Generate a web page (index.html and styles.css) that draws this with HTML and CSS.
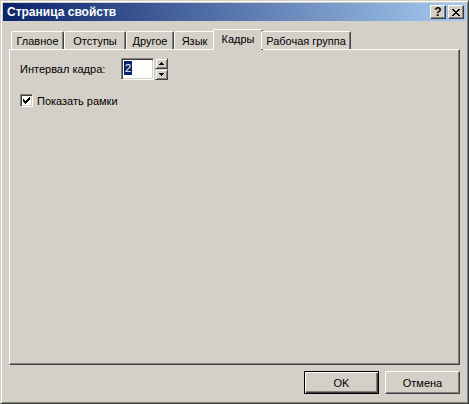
FILE: index.html
```html
<!DOCTYPE html>
<html lang="ru">
<head>
<meta charset="utf-8">
<link rel="stylesheet" href="styles.css">
</head>
<body>
<div class="window">
  <div class="titlebar">
    <span class="title">Страница свойств</span>
    <div class="tbtns">
      <div class="tbtn help">?</div>
      <div class="tbtn">
        <svg width="8" height="7" viewBox="0 0 8 7" shape-rendering="crispEdges" fill="#000">
          <rect x="0" y="0" width="2" height="1"/><rect x="6" y="0" width="2" height="1"/>
          <rect x="1" y="1" width="2" height="1"/><rect x="5" y="1" width="2" height="1"/>
          <rect x="2" y="2" width="4" height="1"/>
          <rect x="3" y="3" width="2" height="1"/>
          <rect x="2" y="4" width="4" height="1"/>
          <rect x="1" y="5" width="2" height="1"/><rect x="5" y="5" width="2" height="1"/>
          <rect x="0" y="6" width="2" height="1"/><rect x="6" y="6" width="2" height="1"/>
        </svg>
      </div>
    </div>
  </div>
  <div class="body">
    <div class="tabs">
      <div class="tab w1">Главное</div>
      <div class="tab w2">Отступы</div>
      <div class="tab w3">Другое</div>
      <div class="tab w4">Язык</div>
      <div class="tab w5 sel">Кадры</div>
      <div class="tab w6">Рабочая группа</div>
    </div>
    <div class="panel">
      <div class="row">
        <span class="lbl">Интервал кадра:</span>
        <div class="edit"><span class="hl">2</span></div>
        <div class="arrows">
          <div class="arr">
            <svg width="5" height="3" viewBox="0 0 5 3" shape-rendering="crispEdges" fill="#000"><rect x="2" y="0" width="1" height="1"/><rect x="1" y="1" width="3" height="1"/><rect x="0" y="2" width="5" height="1"/></svg>
          </div>
          <div class="arr">
            <svg width="5" height="3" viewBox="0 0 5 3" shape-rendering="crispEdges" fill="#000"><rect x="0" y="0" width="5" height="1"/><rect x="1" y="1" width="3" height="1"/><rect x="2" y="2" width="1" height="1"/></svg>
          </div>
        </div>
      </div>
      <div class="chk">
        <span class="box">
          <svg width="7" height="7" viewBox="0 0 7 7" shape-rendering="crispEdges" fill="#000">
            <rect x="6" y="0" width="1" height="1"/>
            <rect x="5" y="1" width="2" height="1"/>
            <rect x="0" y="2" width="1" height="1"/><rect x="4" y="2" width="3" height="1"/>
            <rect x="0" y="3" width="2" height="1"/><rect x="3" y="3" width="3" height="1"/>
            <rect x="0" y="4" width="5" height="1"/>
            <rect x="1" y="5" width="3" height="1"/>
            <rect x="2" y="6" width="1" height="1"/>
          </svg>
        </span>
        <span class="chk-label">Показать рамки</span>
      </div>
    </div>
    <div class="buttons">
      <div class="btn def">OK</div>
      <div class="btn">Отмена</div>
    </div>
  </div>
</div>
</body>
</html>
```
FILE: styles.css
```css
html, body {
  margin: 0;
  padding: 0;
  background: #d4d0c8;
}
body {
  font: 11px "Liberation Sans", Arial, sans-serif;
  color: #000;
}
.window {
  width: 469px;
  height: 404px;
  box-sizing: border-box;
  background: #d4d0c8;
  border: 1px solid;
  border-color: #d4d0c8 #404040 #404040 #d4d0c8;
  box-shadow: inset 1px 1px #fff, inset -1px -1px #808080;
  padding: 2px;
  display: flex;
  flex-direction: column;
}
.titlebar {
  height: 18px;
  flex: none;
  background: linear-gradient(to right, #0a246a, #a6caf0);
  display: flex;
  align-items: center;
  padding: 0 2px;
}
.title {
  flex: 1;
  color: #fff;
  font-weight: bold;
  font-size: 12px;
  padding-left: 2px;
}
.tbtns {
  display: flex;
  gap: 2px;
}
.tbtn {
  width: 16px;
  height: 14px;
  box-sizing: border-box;
  background: #d4d0c8;
  border: 1px solid;
  border-color: #fff #404040 #404040 #fff;
  box-shadow: inset -1px -1px #808080;
  display: flex;
  align-items: center;
  justify-content: center;
}
.tbtn.help {
  font-weight: bold;
  font-size: 12px;
  line-height: 12px;
}
.body {
  flex: 1;
  display: flex;
  flex-direction: column;
  padding: 8px 6px 7px 6px;
  min-height: 0;
}
.tabs {
  display: flex;
  align-items: flex-end;
  height: 20px;
  padding-left: 2px;
  position: relative;
  z-index: 1;
  flex: none;
}
.tab {
  height: 18px;
  box-sizing: border-box;
  border: 1px solid;
  border-bottom: none;
  border-color: #fff #404040 transparent #fff;
  box-shadow: inset -1px 0 #808080;
  border-radius: 2px 2px 0 0;
  background: #d4d0c8;
  display: flex;
  align-items: center;
  justify-content: center;
  padding-top: 1px;
  white-space: nowrap;
}
.w1 { width: 53px; }
.w2 { width: 62px; }
.w3 { width: 48px; }
.w4 { width: 41px; }
.w5 { width: 46px; }
.w6 { width: 90px; }
.tab.sel {
  width: 50px;
  height: 21px;
  margin: 0 -2px -1px -2px;
  padding-top: 0;
  padding-bottom: 3px;
}
.panel {
  flex: 1;
  border: 1px solid;
  border-color: #fff #404040 #404040 #fff;
  box-shadow: inset -1px -1px #808080;
  padding: 8px 10px;
}
.row {
  display: flex;
  align-items: center;
  height: 22px;
}
.lbl {
  width: 101px;
}
.edit {
  width: 33px;
  height: 22px;
  box-sizing: border-box;
  background: #fff;
  border: 1px solid;
  border-color: #808080 #fff #fff #808080;
  box-shadow: inset 1px 1px #404040, inset -1px -1px #d4d0c8;
  padding: 2px 0 0 2px;
  display: flex;
  align-items: flex-start;
}
.hl {
  background: #0a246a;
  color: #fff;
  line-height: 14px;
  padding: 0 1px;
}
.arrows {
  margin-left: 1px;
  display: flex;
  flex-direction: column;
  height: 22px;
}
.arr {
  width: 13px;
  height: 11px;
  box-sizing: border-box;
  background: #d4d0c8;
  border: 1px solid;
  border-color: #d4d0c8 #404040 #404040 #d4d0c8;
  box-shadow: inset 1px 1px #fff, inset -1px -1px #808080;
  display: flex;
  align-items: center;
  justify-content: center;
}
.chk {
  display: flex;
  align-items: center;
  margin-top: 14px;
  gap: 4px;
}
.box {
  width: 13px;
  height: 13px;
  box-sizing: border-box;
  background: #fff;
  border: 1px solid;
  border-color: #808080 #fff #fff #808080;
  box-shadow: inset 1px 1px #404040, inset -1px -1px #d4d0c8;
  display: flex;
  align-items: center;
  justify-content: center;
}
.buttons {
  display: flex;
  justify-content: flex-end;
  gap: 6px;
  margin-top: 6px;
  flex: none;
}
.btn {
  width: 75px;
  height: 23px;
  box-sizing: border-box;
  border: 1px solid;
  border-color: #fff #404040 #404040 #fff;
  box-shadow: inset -1px -1px #808080;
  display: flex;
  align-items: center;
  justify-content: center;
}
.btn.def {
  border-color: #000;
  box-shadow: inset 1px 1px #fff, inset -1px -1px #404040, inset -2px -2px #808080;
}
```
